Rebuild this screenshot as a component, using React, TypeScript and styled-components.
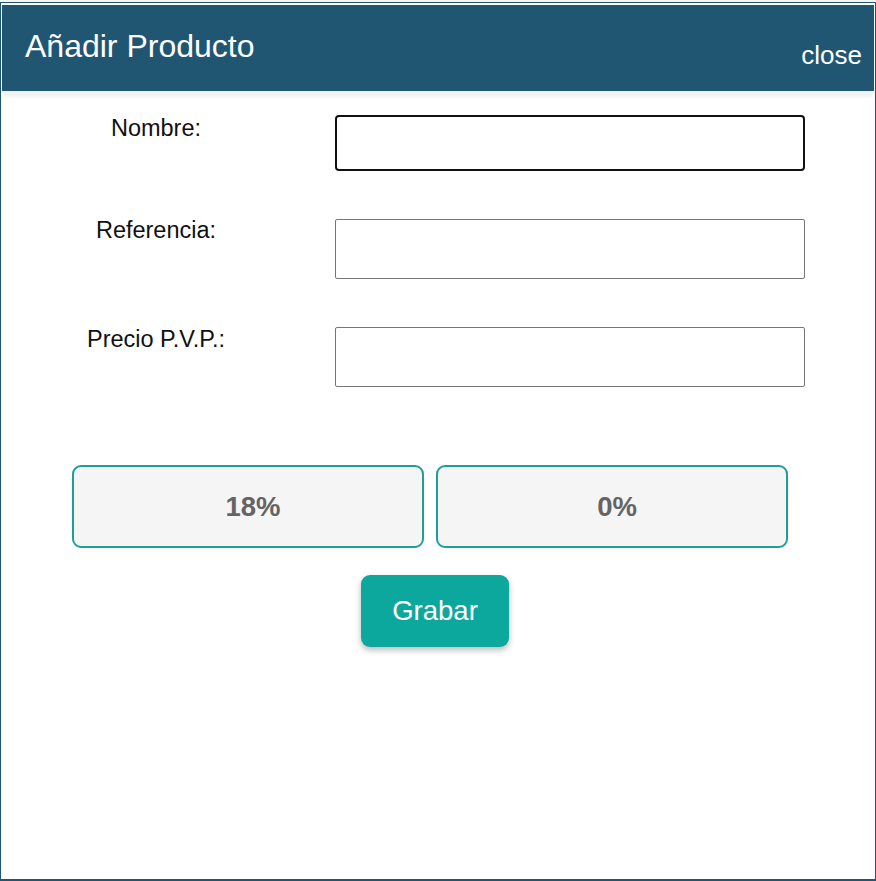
import React from "react";
import styled, { createGlobalStyle } from "styled-components";

const GlobalStyle = createGlobalStyle`
  html, body {
    margin: 0;
    padding: 0;
    background: #f3f3f3;
    font-family: "Liberation Sans", Arial, sans-serif;
  }
  * { box-sizing: border-box; }
`;

const Dialog = styled.div`
  margin-top: 2px;
  width: 876px;
  height: 879px;
  background: #ffffff;
  border: 1px solid #215673;
  border-bottom-width: 2px;
  padding: 2px 1px 0 1px;
  display: flex;
  flex-direction: column;
`;

const Header = styled.header`
  height: 86px;
  background: #215673;
  color: #ffffff;
  display: flex;
  justify-content: space-between;
  align-items: flex-start;
  padding: 0 12px 0 23px;
  box-shadow: 0 6px 4px rgba(0, 0, 0, 0.055);
  position: relative;
  z-index: 1;
`;

const Title = styled.h2`
  margin: 23px 0 0 0;
  font-size: 32px;
  font-weight: 400;
  line-height: normal;
`;

const Close = styled.span`
  margin-top: 35px;
  font-size: 26px;
  line-height: normal;
  cursor: pointer;
`;

const Form = styled.form`
  display: grid;
  grid-template-columns: 230px 470px;
  column-gap: 64px;
  row-gap: 48px;
  padding: 24px 0 0 39px;
`;

const Label = styled.label<{ $offset?: number }>`
  text-align: center;
  font-size: 23.5px;
  color: #111111;
  line-height: normal;
  align-self: start;
  margin-top: ${(p) => p.$offset ?? 0}px;
`;

const Input = styled.input<{ $focused?: boolean }>`
  width: 470px;
  height: ${(p) => (p.$focused ? 56 : 60)}px;
  border: ${(p) => (p.$focused ? "2px solid #111111" : "1px solid #767676")};
  border-radius: ${(p) => (p.$focused ? 4 : 2)}px;
  background: #ffffff;
  font-size: 20px;
  padding: 0 8px;
  font-family: inherit;
  outline: none;
`;

const ToggleRow = styled.div`
  display: flex;
  gap: 12px;
  padding-left: 70px;
  margin-top: 78px;
`;

const Toggle = styled.button`
  width: 352px;
  height: 83px;
  background: #f5f5f5;
  border: 2px solid #1f9e99;
  border-radius: 9px;
  color: #646464;
  font-family: inherit;
  font-weight: 700;
  font-size: 27.5px;
  padding: 0 0 0 10px;
  cursor: pointer;
`;

const ActionRow = styled.div`
  display: flex;
  padding-left: 359px;
  margin-top: 27px;
`;

const SaveButton = styled.button`
  width: 148px;
  height: 72px;
  background: #0da89d;
  border: none;
  border-radius: 9px;
  color: #ffffff;
  font-family: inherit;
  font-size: 27.5px;
  box-shadow: 0 3px 6px rgba(0, 0, 0, 0.28);
  cursor: pointer;
`;

const fields = [
  { label: "Nombre:", focused: true, offset: 0 },
  { label: "Referencia:", focused: false, offset: -2 },
  { label: "Precio P.V.P.:", focused: false, offset: -1 },
];

export default function App() {
  return (
    <>
      <GlobalStyle />
      <Dialog>
        <Header>
          <Title>Añadir Producto</Title>
          <Close>close</Close>
        </Header>
        <Form onSubmit={(e) => e.preventDefault()}>
          {fields.map((f) => (
            <React.Fragment key={f.label}>
              <Label $offset={f.offset}>{f.label}</Label>
              <Input $focused={f.focused} type="text" />
            </React.Fragment>
          ))}
        </Form>
        <ToggleRow>
          <Toggle type="button">18%</Toggle>
          <Toggle type="button">0%</Toggle>
        </ToggleRow>
        <ActionRow>
          <SaveButton type="button">Grabar</SaveButton>
        </ActionRow>
      </Dialog>
    </>
  );
}
